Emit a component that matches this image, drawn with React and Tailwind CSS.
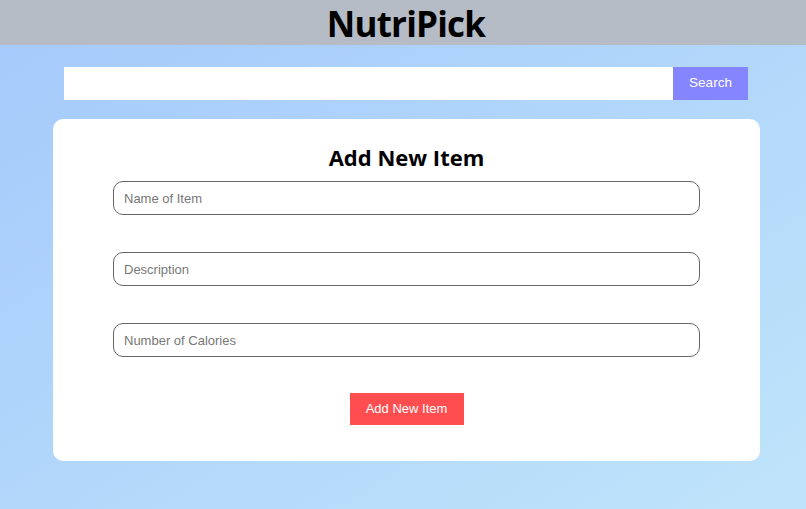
import React, { useState } from "react";

const App = () => {
  const [query, setQuery] = useState("");
  const [form, setForm] = useState({ name: "", description: "", calories: "" });

  const handleChange = (e) => {
    setForm({ ...form, [e.target.name]: e.target.value });
  };

  return (
    <div className="min-h-[509px] w-full bg-gradient-to-br from-[#a5c9fb] to-[#bfe4fa] font-['Liberation_Sans',Arial,sans-serif]">
      {/* Header */}
      <header className="h-[45px] bg-[#b5bcc6] flex items-center justify-center">
        <h1 className="text-[35px] leading-none font-bold text-black font-['Open_Sans','Noto_Sans',sans-serif] tracking-[-0.8px] mt-[1px] ml-[6px]">
          NutriPick
        </h1>
      </header>

      {/* Search */}
      <div className="flex pl-[64px] pr-[58px] pt-[22px]">
        <input
          type="text"
          value={query}
          onChange={(e) => setQuery(e.target.value)}
          className="flex-1 h-[33px] bg-white outline-none px-2"
        />
        <button className="w-[75px] h-[33px] bg-[#8585ff] text-white text-[13.5px]">
          Search
        </button>
      </div>

      {/* Add item card */}
      <div className="mx-[53px] mt-[19px] mr-[46px] bg-white rounded-[10px] h-[342px] px-[60px] pt-[22px]">
        <h2 className="text-center text-[22px] leading-[32px] font-bold text-black font-['Open_Sans','Noto_Sans',sans-serif]">
          Add New Item
        </h2>
        <form className="flex flex-col gap-[37px] mt-[8px]" onSubmit={(e) => e.preventDefault()}>
          <input
            name="name"
            value={form.name}
            onChange={handleChange}
            placeholder="Name of Item"
            className="h-[34px] w-full border border-[#666] rounded-[10px] px-[10px] text-[13px] placeholder-[#777] outline-none"
          />
          <input
            name="description"
            value={form.description}
            onChange={handleChange}
            placeholder="Description"
            className="h-[34px] w-full border border-[#666] rounded-[10px] px-[10px] text-[13px] placeholder-[#777] outline-none"
          />
          <input
            name="calories"
            value={form.calories}
            onChange={handleChange}
            placeholder="Number of Calories"
            className="h-[34px] w-full border border-[#666] rounded-[10px] px-[10px] text-[13px] placeholder-[#777] outline-none"
          />
          <div className="flex justify-center -mt-[1px]">
            <button
              type="submit"
              className="w-[114px] h-[32px] bg-[#ff4d50] text-white text-[13px]"
            >
              Add New Item
            </button>
          </div>
        </form>
      </div>
    </div>
  );
};

export default App;
